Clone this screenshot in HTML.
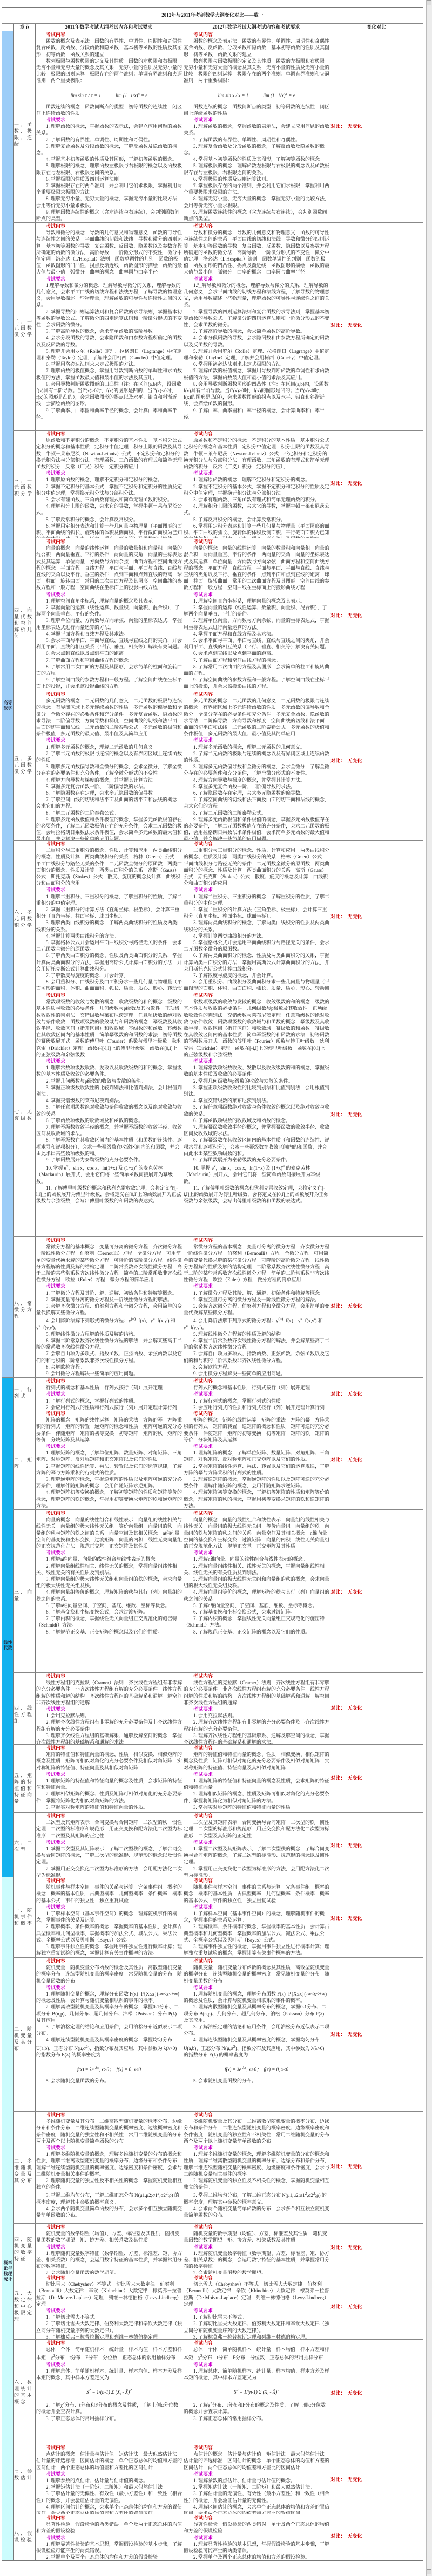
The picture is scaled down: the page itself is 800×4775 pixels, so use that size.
<!DOCTYPE html>
<html><head><meta charset="utf-8">
<style>
*{margin:0;padding:0;box-sizing:border-box}
html,body{width:800px;height:4775px;overflow:hidden;background:#fff}
body{position:relative;font-family:"Liberation Serif","Noto Serif CJK SC","Noto Sans CJK SC",serif;color:#222;font-size:9px;line-height:12.2px}
.a{position:absolute}
.v{position:absolute;width:1px;background:#777}
.h{position:absolute;height:1px;background:#888}
.c{position:absolute;overflow:hidden;padding:0 1px}
.c p{text-indent:2em}
.r{color:#cc0000;font-weight:bold;display:block;text-indent:2em}
.m{color:#cc00cc;font-weight:bold;display:block;text-indent:2em}
.ch{position:absolute;left:26px;width:39px;font-size:9px;line-height:12px;letter-spacing:3px;overflow:hidden}
.d{position:absolute;left:612px;color:#cc0000;font-weight:bold;font-size:9px}
.sec{position:absolute;left:4px;width:21px;font-size:8px;line-height:10px;text-align:center;font-weight:bold;color:#223}
.f{text-align:center;font-style:italic;height:36px;line-height:36px;text-indent:0!important}
</style></head><body>
<!-- scrollbar -->
<div class="a" style="left:789px;top:0;width:11px;height:4775px;background:#ececec;border-left:1px solid #bbb"></div>
<div class="a" style="left:790px;top:0;width:9px;height:10px;background:#ddd;border:1px solid #999"></div>
<div class="a" style="left:790px;top:4762px;width:9px;height:10px;background:#ddd;border:1px solid #999"></div>
<!-- section strips -->
<div class="a" style="left:4px;top:57px;width:21px;height:2496px;background:#9ccdf8"></div>
<div class="a" style="left:4px;top:2553px;width:21px;height:926px;background:#12b2ef"></div>
<div class="a" style="left:4px;top:3479px;width:21px;height:1267px;background:#ccfcfd"></div>
<div class="sec" style="top:1298px">高等<br>数学</div>
<div class="sec" style="top:3040px">线性<br>代数</div>
<div class="sec" style="top:4190px">概率<br>论与<br>数理<br>统计</div>
<!-- outer frame -->
<div class="a" style="left:3px;top:13px;width:781px;height:4734px;border:1px solid #777"></div>
<div class="a" style="left:3px;top:13px;width:781px;height:31px;text-align:center;line-height:31px;font-weight:bold;font-size:9px">2012年与2011年考研数学大纲变化对比——数一</div>
<div class="h" style="left:3px;top:43px;width:781px"></div>
<div class="h" style="left:3px;top:57px;width:781px"></div>
<div class="a" style="left:26px;top:44px;width:39px;line-height:13px;text-align:center;font-weight:bold">章节</div>
<div class="a" style="left:65px;top:44px;width:273px;line-height:13px;text-align:center;font-weight:bold">2011年数学考试大纲考试内容和考试要求</div>
<div class="a" style="left:338px;top:44px;width:273px;line-height:13px;text-align:center;font-weight:bold">2012年数学考试大纲考试内容和考试要求</div>
<div class="a" style="left:611px;top:44px;width:172px;line-height:13px;text-align:center;font-weight:bold">变化对比</div>
<!-- verticals -->
<div class="v" style="left:25px;top:44px;height:4703px"></div>
<div class="v" style="left:65px;top:44px;height:4703px"></div>
<div class="v" style="left:338px;top:44px;height:4703px"></div>
<div class="v" style="left:611px;top:44px;height:4703px"></div>
<!-- row separators -->
<div class="h" style="left:25px;top:412px;width:759px"></div>
<div class="h" style="left:25px;top:797px;width:759px"></div>
<div class="h" style="left:25px;top:997px;width:759px"></div>
<div class="h" style="left:25px;top:1280px;width:759px"></div>
<div class="h" style="left:25px;top:1557px;width:759px"></div>
<div class="h" style="left:25px;top:1838px;width:759px"></div>
<div class="h" style="left:25px;top:2292px;width:759px"></div>
<div class="h" style="left:3px;top:2553px;width:781px"></div>
<div class="h" style="left:25px;top:2613px;width:759px"></div>
<div class="h" style="left:25px;top:2798px;width:759px"></div>
<div class="h" style="left:25px;top:3100px;width:759px"></div>
<div class="h" style="left:25px;top:3233px;width:759px"></div>
<div class="h" style="left:25px;top:3359px;width:759px"></div>
<div class="h" style="left:3px;top:3479px;width:781px"></div>
<div class="h" style="left:25px;top:3628px;width:759px"></div>
<div class="h" style="left:25px;top:3913px;width:759px"></div>
<div class="h" style="left:25px;top:4121px;width:759px"></div>
<div class="h" style="left:25px;top:4215px;width:759px"></div>
<div class="h" style="left:25px;top:4336px;width:759px"></div>
<div class="h" style="left:25px;top:4530px;width:759px"></div>
<div class="h" style="left:25px;top:4660px;width:759px"></div>

<!-- chapter labels -->
<div class="ch" style="top:225px">一、函数、极限、连续</div>
<div class="ch" style="top:590px">二、一元函数微分学</div>
<div class="ch" style="top:885px">三、一元函数积分学</div>
<div class="ch" style="top:1125px">四、向量代数和空间解析几何</div>
<div class="ch" style="top:1400px">五、多元函数微分学</div>
<div class="ch" style="top:1685px">六、多元函数积分学</div>
<div class="ch" style="top:2055px">七、无穷级数</div>
<div class="ch" style="top:2410px">八、常微分方程</div>
<div class="ch" style="top:2570px">一、行列式</div>
<div class="ch" style="top:2700px">二、矩阵</div>
<div class="ch" style="top:2945px">三、向量</div>
<div class="ch" style="top:3160px">四、线性方程组</div>
<div class="ch" style="top:3285px">五、矩阵的特征值和特征向量</div>
<div class="ch" style="top:3410px">六、二次型</div>
<div class="ch" style="top:3535px">一、随机事件和概率</div>
<div class="ch" style="top:3755px">二、随机变量及其分布</div>
<div class="ch" style="top:4000px">三、多维随机变量及其分布</div>
<div class="ch" style="top:4145px">四、随机变量的数字特征</div>
<div class="ch" style="top:4245px">五、大数定律和中心极限定理</div>
<div class="ch" style="top:4410px">六、数理统计的基本概念</div>
<div class="ch" style="top:4575px">七、参数估计</div>
<div class="ch" style="top:4690px">八、假设检验</div>

<!-- change column -->
<div class="d" style="top:228px">对比：　无变化</div>
<div class="d" style="top:597px">对比：　无变化</div>
<div class="d" style="top:890px">对比：　无变化</div>
<div class="d" style="top:1135px">对比：　无变化</div>
<div class="d" style="top:1404px">对比：　无变化</div>
<div class="d" style="top:1693px">对比：　无变化</div>
<div class="d" style="top:2060px">对比：　无变化</div>
<div class="d" style="top:2415px">对比：　无变化</div>
<div class="d" style="top:2578px">对比：　无变化</div>
<div class="d" style="top:2700px">对比：　无变化</div>
<div class="d" style="top:2945px">对比：　无变化</div>
<div class="d" style="top:3160px">对比：　无变化</div>
<div class="d" style="top:3290px">对比：　无变化</div>
<div class="d" style="top:3415px">对比：　无变化</div>
<div class="d" style="top:3550px">对比：　无变化</div>
<div class="d" style="top:3765px">对比：　无变化</div>
<div class="d" style="top:4010px">对比：　无变化</div>
<div class="d" style="top:4160px">对比：　无变化</div>
<div class="d" style="top:4270px">对比：　无变化</div>
<div class="d" style="top:4430px">对比：　无变化</div>
<div class="d" style="top:4590px">对比：　无变化</div>
<div class="d" style="top:4695px">对比：　无变化</div>

<!-- content column 2011 (cloned to 2012) -->
<div class="c c1" style="top:58px;height:354px">
<b class="r">考试内容</b>
<p>函数的概念及表示法　函数的有界性、单调性、周期性和奇偶性　复合函数、反函数、分段函数和隐函数　基本初等函数的性质及其图形　初等函数　函数关系的建立</p>
<p>数列极限与函数极限的定义及其性质　函数的左极限和右极限　无穷小量和无穷大量的概念及其关系　无穷小量的性质及无穷小量的比较　极限的四则运算　极限存在的两个准则：单调有界准则和夹逼准则　两个重要极限：</p>
<p class="f">lim sin x / x = 1　　　lim (1+1/x)<sup>x</sup> = e</p>
<p>函数连续的概念　函数间断点的类型　初等函数的连续性　闭区间上连续函数的性质</p>
<b class="m">考试要求</b>
<p>1. 理解函数的概念，掌握函数的表示法，会建立应用问题的函数关系。</p>
<p>2. 了解函数的有界性、单调性、周期性和奇偶性。</p>
<p>3. 理解复合函数及分段函数的概念，了解反函数及隐函数的概念。</p>
<p>4. 掌握基本初等函数的性质及其图形，了解初等函数的概念。</p>
<p>5. 理解极限的概念，理解函数左极限与右极限的概念以及函数极限存在与左极限、右极限之间的关系。</p>
<p>6. 掌握极限的性质及四则运算法则。</p>
<p>7. 掌握极限存在的两个准则，并会利用它们求极限，掌握利用两个重要极限求极限的方法。</p>
<p>8. 理解无穷小量、无穷大量的概念，掌握无穷小量的比较方法，会用等价无穷小量求极限。</p>
<p>9. 理解函数连续性的概念（含左连续与右连续），会判别函数间断点的类型。</p>
<p>10. 了解连续函数的性质和初等函数的连续性，理解闭区间上连续函数的性质（有界性、最大值和最小值定理、介值定理），并会应用这些性质。</p>
</div>
<div class="c c1" style="top:413px;height:384px">
<b class="r">考试内容</b>
<p>导数和微分的概念　导数的几何意义和物理意义　函数的可导性与连续性之间的关系　平面曲线的切线和法线　导数和微分的四则运算　基本初等函数的导数　复合函数、反函数、隐函数以及参数方程所确定的函数的微分法　高阶导数　一阶微分形式的不变性　微分中值定理　洛必达（L'Hospital）法则　函数单调性的判别　函数的极值　函数图形的凹凸性、拐点及渐近线　函数图形的描绘　函数的最大值与最小值　弧微分　曲率的概念　曲率圆与曲率半径</p>
<b class="m">考试要求</b>
<p>1.理解导数和微分的概念，理解导数与微分的关系，理解导数的几何意义，会求平面曲线的切线方程和法线方程，了解导数的物理意义，会用导数描述一些物理量，理解函数的可导性与连续性之间的关系。</p>
<p>2. 掌握导数的四则运算法则和复合函数的求导法则，掌握基本初等函数的导数公式。了解微分的四则运算法则和一阶微分形式的不变性，会求函数的微分。</p>
<p>3. 了解高阶导数的概念，会求简单函数的高阶导数。</p>
<p>4. 会求分段函数的导数，会求隐函数和由参数方程所确定的函数以及反函数的导数。</p>
<p>5. 理解并会用罗尔（Rolle）定理、拉格朗日（Lagrange）中值定理和泰勒（Taylor）定理，了解并会用柯西（Cauchy）中值定理。</p>
<p>6. 掌握用洛必达法则求未定式极限的方法。</p>
<p>7. 理解函数的极值概念，掌握用导数判断函数的单调性和求函数极值的方法，掌握函数最大值和最小值的求法及其应用。</p>
<p>8. 会用导数判断函数图形的凹凸性（注：在区间(a,b)内，设函数f(x)具有二阶导数。当f''(x)&gt;0时，f(x)的图形是凹的；当f''(x)&lt;0时，f(x)的图形是凸的），会求函数图形的拐点以及水平、铅直和斜渐近线，会描绘函数的图形。</p>
<p>9. 了解曲率、曲率圆和曲率半径的概念，会计算曲率和曲率半径。</p>
</div>
<div class="c c1" style="top:798px;height:199px">
<b class="r">考试内容</b>
<p>原函数和不定积分的概念　不定积分的基本性质　基本积分公式　定积分的概念和基本性质　定积分中值定理　积分上限的函数及其导数　牛顿－莱布尼茨（Newton-Leibniz）公式　不定积分和定积分的换元积分法与分部积分法　有理函数、三角函数的有理式和简单无理函数的积分　反常（广义）积分　定积分的应用</p>
<b class="m">考试要求</b>
<p>1. 理解原函数的概念，理解不定积分和定积分的概念。</p>
<p>2. 掌握不定积分的基本公式，掌握不定积分和定积分的性质及定积分中值定理，掌握换元积分法与分部积分法。</p>
<p>3. 会求有理函数、三角函数有理式和简单无理函数的积分。</p>
<p>4. 理解积分上限的函数，会求它的导数，掌握牛顿－莱布尼茨公式。</p>
<p>5. 了解反常积分的概念，会计算反常积分。</p>
<p>6. 掌握用定积分表达和计算一些几何量与物理量（平面图形的面积、平面曲线的弧长、旋转体的体积及侧面积、平行截面面积为已知的立体体积、功、引力、压力、质心、形心等）及函数的平均值。</p>
</div>
<div class="c c1" style="top:998px;height:282px">
<b class="r">考试内容</b>
<p>向量的概念　向量的线性运算　向量的数量积和向量积　向量的混合积　两向量垂直、平行的条件　两向量的夹角　向量的坐标表达式及其运算　单位向量　方向数与方向余弦　曲面方程和空间曲线方程的概念　平面方程　直线方程　平面与平面、平面与直线、直线与直线的夹角以及平行、垂直的条件　点到平面和点到直线的距离　球面　柱面　旋转曲面　常用的二次曲面方程及其图形　空间曲线的参数方程和一般方程　空间曲线在坐标面上的投影曲线方程</p>
<b class="m">考试要求</b>
<p>1. 理解空间直角坐标系，理解向量的概念及其表示。</p>
<p>2. 掌握向量的运算（线性运算、数量积、向量积、混合积），了解两个向量垂直、平行的条件。</p>
<p>3. 理解单位向量、方向数与方向余弦、向量的坐标表达式，掌握用坐标表达式进行向量运算的方法。</p>
<p>4. 掌握平面方程和直线方程及其求法。</p>
<p>5. 会求平面与平面、平面与直线、直线与直线之间的夹角，并会利用平面、直线的相互关系（平行、垂直、相交等）解决有关问题。</p>
<p>6. 会求点到直线以及点到平面的距离。</p>
<p>7. 了解曲面方程和空间曲线方程的概念。</p>
<p>8. 了解常用二次曲面的方程及其图形，会求简单的柱面和旋转曲面的方程。</p>
<p>9. 了解空间曲线的参数方程和一般方程。了解空间曲线在坐标平面上的投影，并会求该投影曲线的方程。</p>
</div>
<div class="c c1" style="top:1281px;height:276px">
<b class="r">考试内容</b>
<p>多元函数的概念　二元函数的几何意义　二元函数的极限与连续的概念　有界闭区域上多元连续函数的性质　多元函数的偏导数和全微分　全微分存在的必要条件和充分条件　多元复合函数、隐函数的求导法　二阶偏导数　方向导数和梯度　空间曲线的切线和法平面　曲面的切平面和法线　二元函数的二阶泰勒公式　多元函数的极值和条件极值　多元函数的最大值、最小值及其简单应用</p>
<b class="m">考试要求</b>
<p>1. 理解多元函数的概念，理解二元函数的几何意义。</p>
<p>2. 了解二元函数的极限与连续的概念以及有界闭区域上连续函数的性质。</p>
<p>3. 理解多元函数偏导数和全微分的概念，会求全微分，了解全微分存在的必要条件和充分条件，了解全微分形式的不变性。</p>
<p>4. 理解方向导数与梯度的概念，并掌握其计算方法。</p>
<p>5. 掌握多元复合函数一阶、二阶偏导数的求法。</p>
<p>6. 了解隐函数存在定理，会求多元隐函数的偏导数。</p>
<p>7. 了解空间曲线的切线和法平面及曲面的切平面和法线的概念，会求它们的方程。</p>
<p>8. 了解二元函数的二阶泰勒公式。</p>
<p>9. 理解多元函数极值和条件极值的概念，掌握多元函数极值存在的必要条件，了解二元函数极值存在的充分条件，会求二元函数的极值，会用拉格朗日乘数法求条件极值，会求简单多元函数的最大值和最小值，并会解决一些简单的应用问题。</p>
</div>
<div class="c c1" style="top:1558px;height:280px">
<b class="r">考试内容</b>
<p>二重积分与三重积分的概念、性质、计算和应用　两类曲线积分的概念、性质及计算　两类曲线积分的关系　格林（Green）公式　平面曲线积分与路径无关的条件　二元函数全微分的原函数　两类曲面积分的概念、性质及计算　两类曲面积分的关系　高斯（Gauss）公式　斯托克斯（Stokes）公式　散度、旋度的概念及计算　曲线积分和曲面积分的应用</p>
<b class="m">考试要求</b>
<p>1. 理解二重积分、三重积分的概念，了解重积分的性质，了解二重积分的中值定理。</p>
<p>2. 掌握二重积分的计算方法（直角坐标、极坐标），会计算三重积分（直角坐标、柱面坐标、球面坐标）。</p>
<p>3. 理解两类曲线积分的概念，了解两类曲线积分的性质及两类曲线积分的关系。</p>
<p>4. 掌握计算两类曲线积分的方法。</p>
<p>5. 掌握格林公式并会运用平面曲线积分与路径无关的条件，会求二元函数全微分的原函数。</p>
<p>6. 了解两类曲面积分的概念、性质及两类曲面积分的关系，掌握计算两类曲面积分的方法，掌握用高斯公式计算曲面积分的方法，并会用斯托克斯公式计算曲线积分。</p>
<p>7. 了解散度与旋度的概念，并会计算。</p>
<p>8. 会用重积分、曲线积分及曲面积分求一些几何量与物理量（平面图形的面积、体积、曲面面积、弧长、质量、质心、形心、转动惯量、引力、功及流量等）。</p>
</div>
<div class="c c1" style="top:1839px;height:453px">
<b class="r">考试内容</b>
<p>常数项级数的收敛与发散的概念　收敛级数的和的概念　级数的基本性质与收敛的必要条件　几何级数与p级数及其收敛性　正项级数收敛性的判别法　交错级数与莱布尼茨定理　任意项级数的绝对收敛与条件收敛　函数项级数的收敛域与和函数的概念　幂级数及其收敛半径、收敛区间（指开区间）和收敛域　幂级数的和函数　幂级数在其收敛区间内的基本性质　简单幂级数的和函数的求法　初等函数的幂级数展开式　函数的傅里叶（Fourier）系数与傅里叶级数　狄利克雷（Dirichlet）定理　函数在[-l,l]上的傅里叶级数　函数在[0,l]上的正弦级数和余弦级数</p>
<b class="m">考试要求</b>
<p>1. 理解常数项级数收敛、发散以及收敛级数的和的概念，掌握级数的基本性质及收敛的必要条件。</p>
<p>2. 掌握几何级数与p级数的收敛与发散的条件。</p>
<p>3. 掌握正项级数收敛性的比较判别法和比值判别法，会用根值判别法。</p>
<p>4. 掌握交错级数的莱布尼茨判别法。</p>
<p>5. 了解任意项级数绝对收敛与条件收敛的概念以及绝对收敛与收敛的关系。</p>
<p>6. 了解函数项级数的收敛域及和函数的概念。</p>
<p>7. 理解幂级数收敛半径的概念，并掌握幂级数的收敛半径、收敛区间及收敛域的求法。</p>
<p>8. 了解幂级数在其收敛区间内的基本性质（和函数的连续性、逐项求导和逐项积分），会求一些幂级数在收敛区间内的和函数，并会由此求出某些数项级数的和。</p>
<p>9. 了解函数展开为泰勒级数的充分必要条件。</p>
<p>10. 掌握 e<sup>x</sup>，sin x，cos x，ln(1+x) 及 (1+x)<sup>α</sup> 的麦克劳林（Maclaurin）展开式，会用它们将一些简单函数间接展开为幂级数。</p>
<p>11. 了解傅里叶级数的概念和狄利克雷收敛定理，会将定义在[-l,l]上的函数展开为傅里叶级数，会将定义在[0,l]上的函数展开为正弦级数与余弦级数，会写出傅里叶级数的和函数的表达式。</p>
</div>
<div class="c c1" style="top:2293px;height:260px">
<b class="r">考试内容</b>
<p>常微分方程的基本概念　变量可分离的微分方程　齐次微分方程　一阶线性微分方程　伯努利（Bernoulli）方程　全微分方程　可用简单的变量代换求解的某些微分方程　可降阶的高阶微分方程　线性微分方程解的性质及解的结构定理　二阶常系数齐次线性微分方程　高于二阶的某些常系数齐次线性微分方程　简单的二阶常系数非齐次线性微分方程　欧拉（Euler）方程　微分方程的简单应用</p>
<b class="m">考试要求</b>
<p>1. 了解微分方程及其阶、解、通解、初始条件和特解等概念。</p>
<p>2. 掌握变量可分离的微分方程及一阶线性微分方程的解法。</p>
<p>3. 会解齐次微分方程、伯努利方程和全微分方程，会用简单的变量代换解某些微分方程。</p>
<p>4. 会用降阶法解下列形式的微分方程：y<sup>(n)</sup>=f(x)，y''=f(x,y') 和 y''=f(y,y')。</p>
<p>5. 理解线性微分方程解的性质及解的结构。</p>
<p>6. 掌握二阶常系数齐次线性微分方程的解法，并会解某些高于二阶的常系数齐次线性微分方程。</p>
<p>7. 会解自由项为多项式、指数函数、正弦函数、余弦函数以及它们的和与积的二阶常系数非齐次线性微分方程。</p>
<p>8. 会解欧拉方程。</p>
<p>9. 会用微分方程解决一些简单的应用问题。</p>
</div>
<div class="c c1" style="top:2554px;height:59px">
<b class="r">考试内容</b>
<div style="text-indent:2em">行列式的概念和基本性质　行列式按行（列）展开定理</div>
<b class="m">考试要求</b>
<div style="text-indent:2em">1. 了解行列式的概念，掌握行列式的性质。</div>
<div style="text-indent:2em">2. 会应用行列式的性质和行列式按行（列）展开定理计算行列式。</div>
</div>
<div class="c c1" style="top:2614px;height:184px">
<b class="r">考试内容</b>
<p>矩阵的概念　矩阵的线性运算　矩阵的乘法　方阵的幂　方阵乘积的行列式　矩阵的转置　逆矩阵的概念和性质　矩阵可逆的充分必要条件　伴随矩阵　矩阵的初等变换　初等矩阵　矩阵的秩　矩阵的等价　分块矩阵及其运算</p>
<b class="m">考试要求</b>
<p>1. 理解矩阵的概念，了解单位矩阵、数量矩阵、对角矩阵、三角矩阵、对称矩阵、反对称矩阵和正交矩阵以及它们的性质。</p>
<p>2. 掌握矩阵的线性运算、乘法、转置以及它们的运算规律，了解方阵的幂与方阵乘积的行列式的性质。</p>
<p>3. 理解逆矩阵的概念，掌握逆矩阵的性质以及矩阵可逆的充分必要条件，理解伴随矩阵的概念，会用伴随矩阵求逆矩阵。</p>
<p>4. 理解矩阵初等变换的概念，了解初等矩阵的性质和矩阵等价的概念，理解矩阵的秩的概念，掌握用初等变换求矩阵的秩和逆矩阵的方法。</p>
<p>5. 了解分块矩阵及其运算。</p>
</div>
<div class="c c1" style="top:2799px;height:301px">
<b class="r">考试内容</b>
<p>向量的概念　向量的线性组合和线性表示　向量组的线性相关与线性无关　向量组的极大线性无关组　等价向量组　向量组的秩　向量组的秩与矩阵的秩之间的关系　向量空间及其相关概念　n维向量空间的基变换和坐标变换　过渡矩阵　向量的内积　线性无关向量组的正交规范化方法　规范正交基　正交矩阵及其性质</p>
<b class="m">考试要求</b>
<p>1. 理解n维向量、向量的线性组合与线性表示的概念。</p>
<p>2. 理解向量组线性相关、线性无关的概念，掌握向量组线性相关、线性无关的有关性质及判别法。</p>
<p>3. 理解向量组的极大线性无关组和向量组的秩的概念，会求向量组的极大线性无关组及秩。</p>
<p>4. 理解向量组等价的概念，理解矩阵的秩与其行（列）向量组的秩之间的关系。</p>
<p>5. 了解n维向量空间、子空间、基底、维数、坐标等概念。</p>
<p>6. 了解基变换和坐标变换公式，会求过渡矩阵。</p>
<p>7. 了解内积的概念，掌握线性无关向量组正交规范化的施密特（Schmidt）方法。</p>
<p>8. 了解规范正交基、正交矩阵的概念以及它们的性质。</p>
</div>
<div class="c c1" style="top:3101px;height:132px">
<b class="r">考试内容</b>
<p>线性方程组的克拉默（Cramer）法则　齐次线性方程组有非零解的充分必要条件　非齐次线性方程组有解的充分必要条件　线性方程组解的性质和解的结构　齐次线性方程组的基础解系和通解　解空间　非齐次线性方程组的通解</p>
<b class="m">考试要求</b>
<p>1. 会用克拉默法则。</p>
<p>2. 理解齐次线性方程组有非零解的充分必要条件及非齐次线性方程组有解的充分必要条件。</p>
<p>3. 理解齐次线性方程组的基础解系、通解及解空间的概念，掌握齐次线性方程组的基础解系和通解的求法。</p>
<p>4. 理解非齐次线性方程组解的结构及通解的概念。</p>
</div>
<div class="c c1" style="top:3234px;height:125px">
<b class="r">考试内容</b>
<p>矩阵的特征值和特征向量的概念、性质　相似变换、相似矩阵的概念及性质　矩阵可相似对角化的充分必要条件及相似对角矩阵　实对称矩阵的特征值、特征向量及其相似对角矩阵</p>
<b class="m">考试要求</b>
<p>1. 理解矩阵的特征值和特征向量的概念及性质，会求矩阵的特征值和特征向量。</p>
<p>2. 理解相似矩阵的概念、性质及矩阵可相似对角化的充分必要条件，掌握将矩阵化为相似对角矩阵的方法。</p>
<p>3. 掌握实对称矩阵的特征值和特征向量的性质。</p>
</div>
<div class="c c1" style="top:3360px;height:119px">
<b class="r">考试内容</b>
<p>二次型及其矩阵表示　合同变换与合同矩阵　二次型的秩　惯性定理　二次型的标准形和规范形　用正交变换和配方法化二次型为标准形　二次型及其矩阵的正定性</p>
<b class="m">考试要求</b>
<p>1. 掌握二次型及其矩阵表示，了解二次型秩的概念，了解合同变换与合同矩阵的概念，了解二次型的标准形、规范形的概念以及惯性定理。</p>
<p>2. 掌握用正交变换化二次型为标准形的方法，会用配方法化二次型为标准形。</p>
<p>3. 理解正定二次型、正定矩阵的概念，并掌握其判别法。</p>
</div>
<div class="c c1" style="top:3480px;height:148px">
<b class="r">考试内容</b>
<p>随机事件与样本空间　事件的关系与运算　完备事件组　概率的概念　概率的基本性质　古典型概率　几何型概率　条件概率　概率的基本公式　事件的独立性　独立重复试验</p>
<b class="m">考试要求</b>
<p>1. 了解样本空间（基本事件空间）的概念，理解随机事件的概念，掌握事件的关系及运算。</p>
<p>2. 理解概率、条件概率的概念，掌握概率的基本性质，会计算古典型概率和几何型概率，掌握概率的加法公式、减法公式、乘法公式、全概率公式以及贝叶斯（Bayes）公式。</p>
<p>3. 理解事件独立性的概念，掌握用事件独立性进行概率计算；理解独立重复试验的概念，掌握计算有关事件概率的方法。</p>
</div>
<div class="c c1" style="top:3629px;height:284px">
<b class="r">考试内容</b>
<p>随机变量　随机变量分布函数的概念及其性质　离散型随机变量的概率分布　连续型随机变量的概率密度　常见随机变量的分布　随机变量函数的分布</p>
<b class="m">考试要求</b>
<p>1. 理解随机变量的概念，理解分布函数 F(x)=P{X≤x}(-∞&lt;x&lt;+∞) 的概念及性质，会计算与随机变量相联系的事件的概率。</p>
<p>2. 理解离散型随机变量及其概率分布的概念，掌握0-1分布、二项分布 B(n,p)、几何分布、超几何分布、泊松（Poisson）分布 P(λ) 及其应用。</p>
<p>3. 了解泊松定理的结论和应用条件，会用泊松分布近似表示二项分布。</p>
<p>4. 理解连续型随机变量及其概率密度的概念，掌握均匀分布 U(a,b)、正态分布 N(μ,σ<sup>2</sup>)、指数分布及其应用，其中参数为 λ(λ&gt;0) 的指数分布 E(λ) 的概率密度为</p>
<p class="f">f(x) = λe<sup>-λx</sup>, x&gt;0；　f(x) = 0, x≤0</p>
<p>5. 会求随机变量函数的分布。</p>
</div>
<div class="c c1" style="top:3914px;height:207px">
<b class="r">考试内容</b>
<p>多维随机变量及其分布　二维离散型随机变量的概率分布、边缘分布和条件分布　二维连续型随机变量的概率密度、边缘概率密度和条件密度　随机变量的独立性和不相关性　常用二维随机变量的分布　两个及两个以上随机变量简单函数的分布</p>
<b class="m">考试要求</b>
<p>1. 理解多维随机变量的概念，理解多维随机变量的分布的概念和性质，理解二维离散型随机变量的概率分布、边缘分布和条件分布，理解二维连续型随机变量的概率密度、边缘密度和条件密度，会求与二维随机变量相关事件的概率。</p>
<p>2. 理解随机变量的独立性及不相关性的概念，掌握随机变量相互独立的条件。</p>
<p>3. 掌握二维均匀分布，了解二维正态分布 N(μ1,μ2;σ1<sup>2</sup>,σ2<sup>2</sup>;ρ) 的概率密度，理解其中参数的概率意义。</p>
<p>4. 会求两个随机变量简单函数的分布，会求多个相互独立随机变量简单函数的分布。</p>
</div>
<div class="c c1" style="top:4122px;height:93px">
<b class="r">考试内容</b>
<p>随机变量的数学期望（均值）、方差、标准差及其性质　随机变量函数的数学期望　矩、协方差、相关系数及其性质</p>
<b class="m">考试要求</b>
<p>1. 理解随机变量数字特征（数学期望、方差、标准差、矩、协方差、相关系数）的概念，会运用数字特征的基本性质，并掌握常用分布的数字特征。</p>
<p>2. 会求随机变量函数的数学期望。</p>
</div>
<div class="c c1" style="top:4216px;height:120px">
<b class="r">考试内容</b>
<p>切比雪夫（Chebyshev）不等式　切比雪夫大数定律　伯努利（Bernoulli）大数定律　辛钦（Khinchine）大数定律　棣莫弗－拉普拉斯（De Moivre-Laplace）定理　列维－林德伯格（Levy-Lindberg）定理</p>
<b class="m">考试要求</b>
<p>1. 了解切比雪夫不等式。</p>
<p>2. 了解切比雪夫大数定律、伯努利大数定律和辛钦大数定律（独立同分布随机变量序列的大数定律）。</p>
<p>3. 了解棣莫弗－拉普拉斯定理和列维－林德伯格定理。</p>
</div>
<div class="c c1" style="top:4337px;height:193px">
<b class="r">考试内容</b>
<p>总体　个体　简单随机样本　统计量　样本均值　样本方差和样本矩　χ<sup>2</sup>分布　t分布　F分布　分位数　正态总体的常用抽样分布</p>
<b class="m">考试要求</b>
<p>1. 理解总体、简单随机样本、统计量、样本均值、样本方差及样本矩的概念，其中样本方差定义为</p>
<p class="f">S<sup>2</sup> = 1/(n-1) Σ (X<sub>i</sub> - X̄)<sup>2</sup></p>
<p>2. 了解χ<sup>2</sup>分布、t分布和F分布的概念及性质，了解上侧α分位数的概念并会查表计算。</p>
<p>3. 了解正态总体的常用抽样分布。</p>
</div>
<div class="c c1" style="top:4531px;height:129px">
<b class="r">考试内容</b>
<p>点估计的概念　估计量与估计值　矩估计法　最大似然估计法　估计量的评选标准　区间估计的概念　单个正态总体的均值和方差的区间估计　两个正态总体的均值差和方差比的区间估计</p>
<b class="m">考试要求</b>
<p>1. 理解参数的点估计、估计量与估计值的概念。</p>
<p>2. 掌握矩估计法（一阶矩、二阶矩）和最大似然估计法。</p>
<p>3. 了解估计量的无偏性、有效性（最小方差性）和一致性（相合性）的概念，并会验证估计量的无偏性。</p>
<p>4. 理解区间估计的概念，会求单个正态总体的均值和方差的置信区间，会求两个正态总体的均值差和方差比的置信区间。</p>
</div>
<div class="c c1" style="top:4661px;height:85px">
<b class="r">考试内容</b>
<p>显著性检验　假设检验的两类错误　单个及两个正态总体的均值和方差的假设检验</p>
<b class="m">考试要求</b>
<p>1. 理解显著性检验的基本思想，掌握假设检验的基本步骤，了解假设检验可能产生的两类错误。</p>
<p>2. 掌握单个及两个正态总体的均值和方差的假设检验。</p>
</div>
<script>
document.querySelectorAll('.c1').forEach(function(e){var c=e.cloneNode(true);c.className='c c2';c.style.left='339px';c.style.width='272px';e.parentNode.appendChild(c);e.style.left='66px';e.style.width='272px';});
</script>
<style>.c1{left:66px;width:272px}.c2{left:339px;width:272px}</style>
</body></html>
